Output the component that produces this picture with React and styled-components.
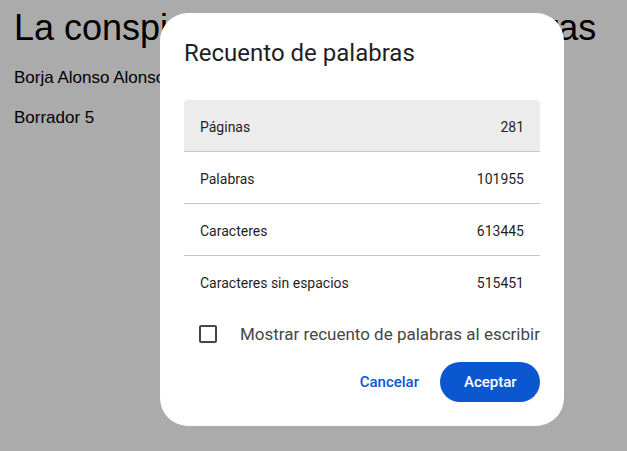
import React from "react";
import styled, { createGlobalStyle } from "styled-components";

const Global = createGlobalStyle`
  html, body { margin: 0; padding: 0; }
  body { background: #ababab; width: 627px; height: 451px; overflow: hidden; }
  * { box-sizing: border-box; }
`;

const Page = styled.div`
  position: relative;
  width: 627px;
  height: 451px;
  padding: 7px 14px;
  font-family: "Liberation Sans", Arial, sans-serif;
  color: #000;
`;

const DocTitle = styled.h1`
  margin: 0;
  font-size: 36px;
  font-weight: 400;
  line-height: 41px;
  white-space: nowrap;
`;

const DocLine = styled.p`
  margin: 20px 0 0;
  font-size: 17px;
  line-height: 20px;
  white-space: nowrap;
`;

const Dialog = styled.div`
  position: absolute;
  left: 160px;
  top: 13px;
  width: 404px;
  padding: 24px;
  background: #fff;
  border-radius: 28px;
  font-family: Roboto, "Liberation Sans", sans-serif;
  display: flex;
  flex-direction: column;
`;

const Title = styled.h2`
  margin: 0;
  font-size: 24px;
  font-weight: 400;
  line-height: 32px;
  color: #1f1f1f;
`;

const Table = styled.div`
  margin-top: 31px;
  display: flex;
  flex-direction: column;
`;

const Row = styled.div`
  display: flex;
  justify-content: space-between;
  padding: 17px 16px 14px;
  font-size: 14px;
  line-height: 20px;
  color: #1f1f1f;
  background: ${(p) => (p.$highlight ? "#ececec" : "transparent")};
  border-radius: ${(p) => (p.$highlight ? "4px 4px 0 0" : "0")};
  border-bottom: 1px solid ${(p) => (p.$last ? "transparent" : "#c7c7c7")};
`;

const CheckRow = styled.label`
  margin-top: 6px;
  height: 40px;
  display: flex;
  align-items: center;
  padding-left: 15px;
  gap: 23px;
  font-size: 17px;
  line-height: 24px;
  color: #444746;
  white-space: nowrap;
`;

const Box = styled.span`
  width: 18px;
  height: 18px;
  border: 2px solid #444746;
  border-radius: 2px;
  flex: none;
`;

const Actions = styled.div`
  margin-top: 8px;
  display: flex;
  justify-content: flex-end;
  align-items: center;
  gap: 9px;
`;

const Button = styled.button`
  height: 40px;
  border: none;
  border-radius: 20px;
  font-family: Roboto, "Liberation Sans", sans-serif;
  font-size: 15px;
  font-weight: 500;
  cursor: pointer;
  padding: 0 ${(p) => (p.$filled ? "24px" : "12px")};
  width: ${(p) => (p.$filled ? "100px" : "auto")};
  background: ${(p) => (p.$filled ? "#0b57d0" : "transparent")};
  color: ${(p) => (p.$filled ? "#fff" : "#0b57d0")};
`;

const stats = [
  ["Páginas", "281"],
  ["Palabras", "101955"],
  ["Caracteres", "613445"],
  ["Caracteres sin espacios", "515451"],
];

export default function App() {
  return (
    <>
      <Global />
      <Page>
        <DocTitle>La conspiración de las cien palabras</DocTitle>
        <DocLine>Borja Alonso Alonso</DocLine>
        <DocLine>Borrador 5</DocLine>
        <Dialog>
          <Title>Recuento de palabras</Title>
          <Table>
            {stats.map(([k, v], i) => (
              <Row key={k} $highlight={i === 0} $last={i === stats.length - 1}>
                <span>{k}</span>
                <span>{v}</span>
              </Row>
            ))}
          </Table>
          <CheckRow>
            <Box />
            Mostrar recuento de palabras al escribir
          </CheckRow>
          <Actions>
            <Button>Cancelar</Button>
            <Button $filled>Aceptar</Button>
          </Actions>
        </Dialog>
      </Page>
    </>
  );
}
